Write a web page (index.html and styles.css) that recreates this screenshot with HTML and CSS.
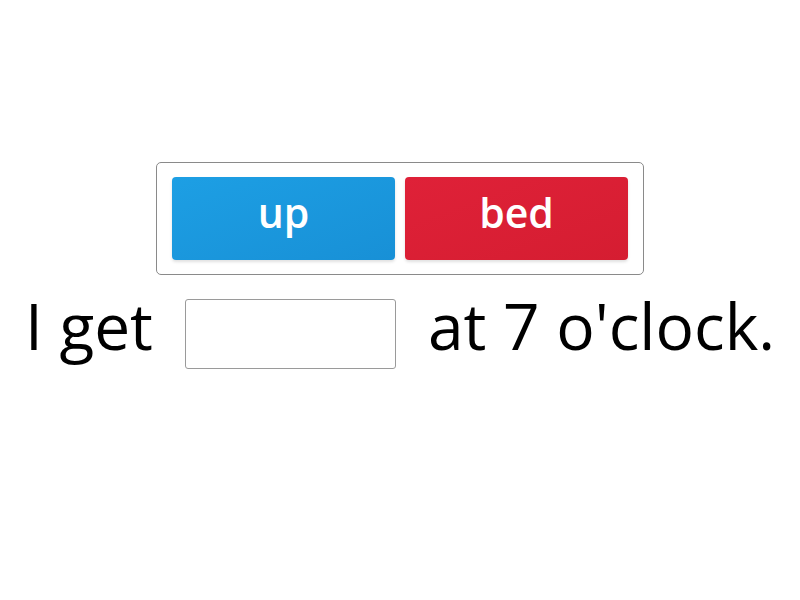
FILE: index.html
```html
<!DOCTYPE html>
<html>
<head>
<meta charset="utf-8">
<link rel="stylesheet" href="styles.css">
</head>
<body>
<main class="stage">
  <div class="bank">
    <div class="tile tile-blue">up</div>
    <div class="tile tile-red">bed</div>
  </div>
  <div class="sentence">
    <span class="word">I get</span>
    <span class="blank"></span>
    <span class="word">at 7 o'clock.</span>
  </div>
</main>
</body>
</html>
```

FILE: styles.css
```css
html, body {
  margin: 0;
  padding: 0;
  background: #fff;
}
body {
  width: 800px;
  height: 600px;
  font-family: "Open Sans", "Liberation Sans", sans-serif;
}
.stage {
  display: flex;
  flex-direction: column;
  align-items: center;
  padding-top: 162px;
}
.bank {
  display: flex;
  gap: 10px;
  padding: 14px 15px 14px 15px;
  border: 1px solid #8a8a8a;
  border-radius: 5px;
}
.tile {
  width: 223px;
  height: 83px;
  box-sizing: border-box;
  padding-bottom: 12px;
  border-radius: 4px;
  color: #fff;
  font-size: 41px;
  font-weight: 600;
  line-height: 1;
  display: flex;
  align-items: center;
  justify-content: center;
  box-shadow: 0 2px 3px rgba(0,0,0,0.12);
}
.tile-blue {
  background: linear-gradient(160deg, #1d9fe4, #1890d6);
}
.tile-red {
  background: linear-gradient(160deg, #df2138, #d51d31);
}
.sentence {
  display: flex;
  align-items: center;
  gap: 32px;
  margin-top: 24px;
  font-size: 64px;
  color: #000;
}
.word {
  line-height: 1;
  margin-top: -17px;
}
.blank {
  width: 209px;
  height: 68px;
  border: 1px solid #9a9a9a;
  border-radius: 3px;
}
```
